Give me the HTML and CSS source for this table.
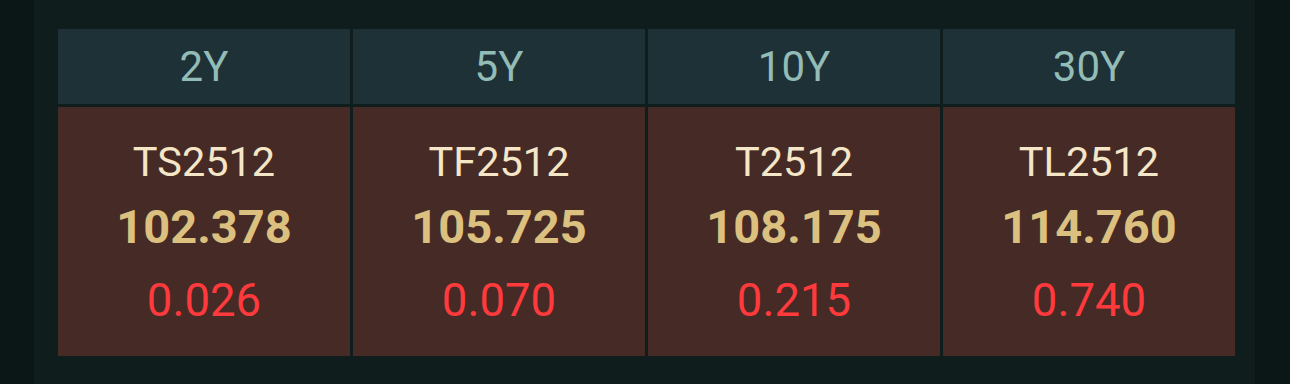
FILE: index.html
```html
<!DOCTYPE html>
<html lang="zh">
<head>
<meta charset="utf-8">
<title>Bond Futures</title>
<link rel="stylesheet" href="styles.css">
</head>
<body>
<div class="page">
  <div class="panel">
    <div class="grid">
      <div class="head">2Y</div>
      <div class="head">5Y</div>
      <div class="head">10Y</div>
      <div class="head">30Y</div>
      <div class="cell">
        <div class="name">TS2512</div>
        <div class="price">102.378</div>
        <div class="chg">0.026</div>
      </div>
      <div class="cell">
        <div class="name">TF2512</div>
        <div class="price">105.725</div>
        <div class="chg">0.070</div>
      </div>
      <div class="cell">
        <div class="name">T2512</div>
        <div class="price">108.175</div>
        <div class="chg">0.215</div>
      </div>
      <div class="cell">
        <div class="name">TL2512</div>
        <div class="price">114.760</div>
        <div class="chg">0.740</div>
      </div>
    </div>
  </div>
</div>
</body>
</html>
```
FILE: styles.css
```css
html, body {
  margin: 0;
  padding: 0;
  background: #0a1716;
  font-family: Roboto, "Noto Sans", "Liberation Sans", sans-serif;
}
.page {
  width: 1290px;
  height: 384px;
  display: flex;
  padding-left: 34px;
  box-sizing: border-box;
}
.panel {
  width: 1221px;
  height: 384px;
  background: #0f1d1c;
  padding: 29px 20px 0 24px;
  box-sizing: border-box;
}
.grid {
  display: grid;
  grid-template-columns: repeat(4, 292px);
  grid-template-rows: 75px 249px;
  column-gap: 3px;
  row-gap: 3px;
}
.head {
  background: #1e3136;
  color: #93bcb6;
  font-size: 42px;
  line-height: 75px;
  text-align: center;
}
.cell {
  background: #452a26;
  display: flex;
  flex-direction: column;
  align-items: center;
  padding-top: 30px;
  box-sizing: border-box;
}
.name {
  color: #f5e6c8;
  font-size: 41.5px;
  line-height: 50px;
}
.price {
  color: #dcc07f;
  font-size: 47px;
  font-weight: 700;
  line-height: 56px;
  margin-top: 12px;
}
.chg {
  color: #ff3a3c;
  font-size: 45.5px;
  line-height: 54px;
  margin-top: 19px;
}
```
